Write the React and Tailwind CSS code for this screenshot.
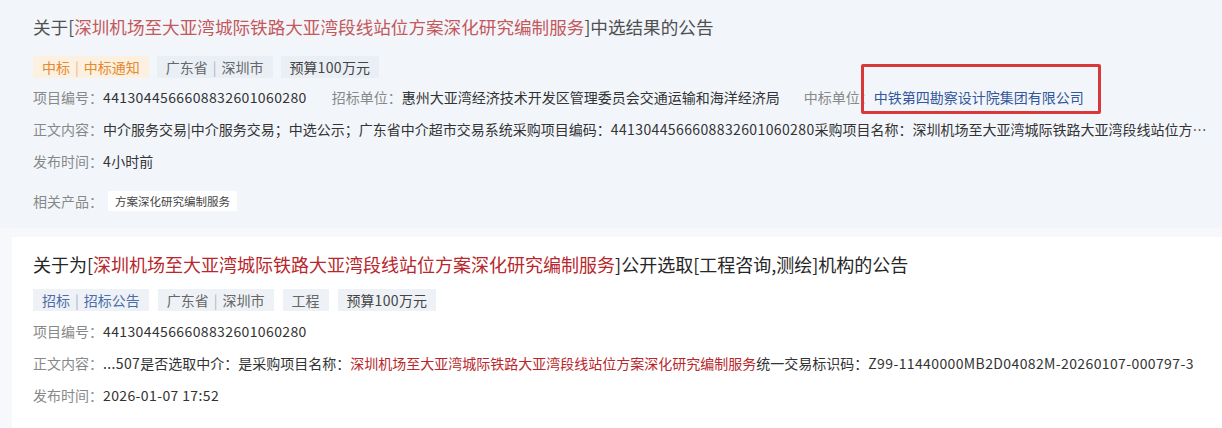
function N({ children }) {
  return <span className="tracking-[0.38px]">{children}</span>;
}

function Tag({ color = "text-[#666]", bg = "bg-[#eaeff6]", a, b, sep = "text-[#b5b5b5]" }) {
  return (
    <span className={`h-[22px] leading-[22px] px-[9px] text-[14px] whitespace-nowrap ${bg} ${color}`}>
      {a}
      {b ? (
        <>
          <span className={`mx-[5px] ${sep}`}>|</span>
          {b}
        </>
      ) : null}
    </span>
  );
}

export default function App() {
  const font = { fontFamily: '"Noto Sans CJK SC", "Noto Sans", sans-serif' };
  const red1 = "text-[#c4585a]";
  const red2 = "text-[#b8272c]";
  return (
    <div style={font} className="w-[1222px] h-[428px] overflow-hidden bg-[#f6f8fb] text-[14px]">
      {/* Card 1 */}
      <div className="bg-[#f2f6fb] pl-[33px] pr-[14px] pt-[15px] pb-[11px]">
        <div className="h-[24px] leading-[24px] text-[17.6px] text-[#505050] whitespace-nowrap">
          关于[<span className={red1}>深圳机场至大亚湾城际铁路大亚湾段线站位方案深化研究编制服务</span>]中选结果的公告
        </div>
        <div className="mt-[17px] flex items-center gap-[8px] h-[22px]">
          <Tag bg="bg-[#fcf0e1]" color="text-[#e58a2e]" sep="text-[#eab88a]" a="中标" b="中标通知" />
          <Tag a="广东省" b="深圳市" />
          <Tag color="text-[#444]" a={<>预算<N>100</N>万元</>} />
        </div>
        <div className="mt-[3px] h-[32px] flex items-center whitespace-nowrap">
          <span className="text-[#888]">项目编号：</span>
          <span className="text-[#333]"><N>4413044566608832601060280</N></span>
          <span className="ml-[25px] text-[#888]">招标单位：</span>
          <span className="text-[#333]">惠州大亚湾经济技术开发区管理委员会交通运输和海洋经济局</span>
          <span className="ml-[24px] relative">
            <span className="text-[#888]">中标单位：</span>
            <span className="text-[#33579a]">中铁第四勘察设计院集团有限公司</span>
            <span className="absolute left-[57px] top-[-23px] w-[240px] h-[50px] border-[3px] border-[#d8383a] rounded-[2px]" />
          </span>
        </div>
        <div className="h-[32px] flex items-center whitespace-nowrap">
          <span className="text-[#888] shrink-0">正文内容：</span>
          <span className="text-[#333] min-w-0 truncate">
            中介服务交易|中介服务交易；中选公示；广东省中介超市交易系统采购项目编码：<N>4413044566608832601060280</N>采购项目名称：深圳机场至大亚湾城际铁路大亚湾段线站位方案深化研究编制服务
          </span>
        </div>
        <div className="h-[32px] flex items-center whitespace-nowrap">
          <span className="text-[#888]">发布时间：</span>
          <span className="text-[#333]"><N>4</N>小时前</span>
        </div>
        <div className="mt-[8px] h-[32px] flex items-center whitespace-nowrap">
          <span className="text-[#888]">相关产品：</span>
          <span className="ml-[5px] h-[20px] leading-[20px] px-[7px] bg-white text-[#444] text-[11.5px]">方案深化研究编制服务</span>
        </div>
      </div>

      {/* Card 2 */}
      <div className="mt-[9px] ml-[12px] bg-white pl-[21px] pr-[17px] pt-[15px] pb-[20px]">
        <div className="h-[24px] leading-[24px] text-[18px] text-[#262626] whitespace-nowrap">
          关于为[<span className={red2}>深圳机场至大亚湾城际铁路大亚湾段线站位方案深化研究编制服务</span>]公开选取[工程咨询,测绘]机构的公告
        </div>
        <div className="mt-[13px] flex items-center gap-[9px] h-[22px]">
          <Tag bg="bg-[#eef2f7]" color="text-[#4b6ea8]" sep="text-[#9fb2cf]" a="招标" b="招标公告" />
          <Tag bg="bg-[#eef2f7]" a="广东省" b="深圳市" />
          <Tag bg="bg-[#eef2f7]" a="工程" />
          <Tag bg="bg-[#eef2f7]" color="text-[#444]" a={<>预算<N>100</N>万元</>} />
        </div>
        <div className="mt-[4px] h-[32px] flex items-center whitespace-nowrap">
          <span className="text-[#888]">项目编号：</span>
          <span className="text-[#333]"><N>4413044566608832601060280</N></span>
        </div>
        <div className="h-[32px] flex items-center whitespace-nowrap">
          <span className="text-[#888] shrink-0">正文内容：</span>
          <span className="text-[#333] min-w-0 truncate">
            <N>...507</N>是否选取中介：是采购项目名称：<span className={red2}>深圳机场至大亚湾城际铁路大亚湾段线站位方案深化研究编制服务</span>统一交易标识码：<N>Z99-11440000MB2D04082M-20260107-000797-3</N>
          </span>
        </div>
        <div className="h-[32px] flex items-center whitespace-nowrap">
          <span className="text-[#888]">发布时间：</span>
          <span className="text-[#333]"><N>2026-01-07 17:52</N></span>
        </div>
      </div>
    </div>
  );
}
